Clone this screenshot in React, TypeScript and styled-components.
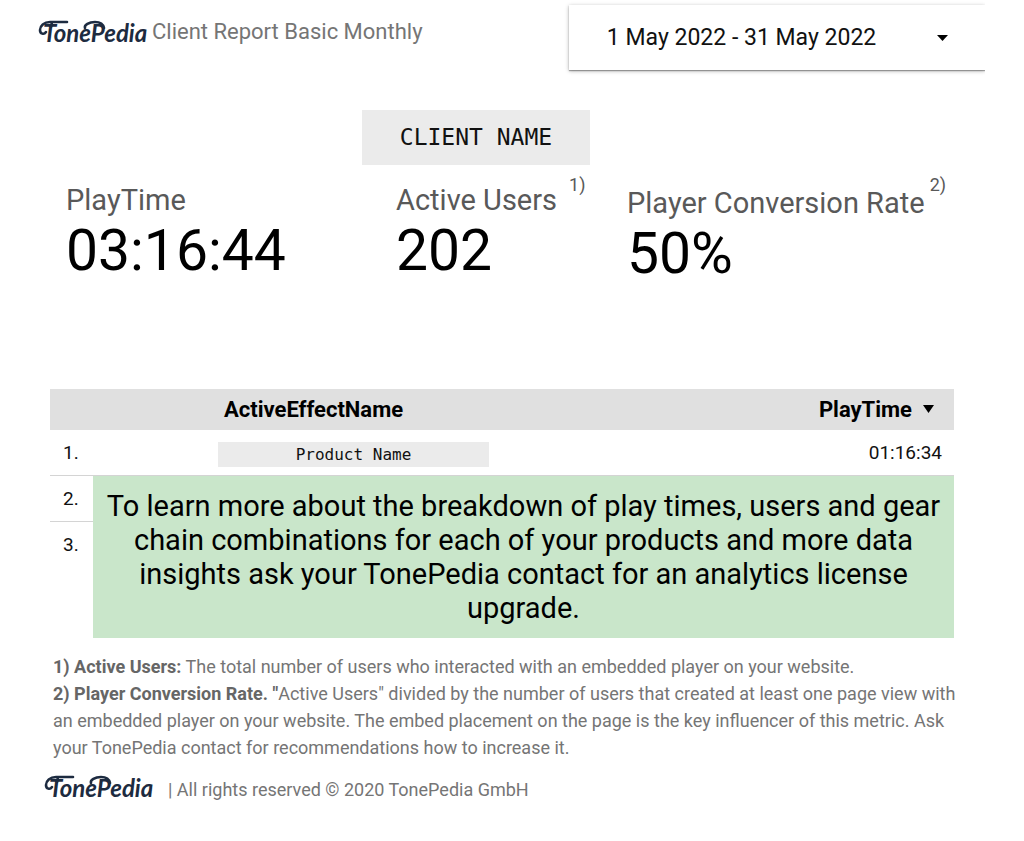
import React from 'react';
import styled, { createGlobalStyle } from 'styled-components';

const GlobalStyle = createGlobalStyle`
  * { box-sizing: border-box; }
  body {
    margin: 0;
    background: #fff;
    color: #000;
    font-family: Roboto, "Liberation Sans", sans-serif;
  }
  h1, h2, p, dl, dt, dd { margin: 0; font-weight: 400; }
`;

const Page = styled.div`
  padding: 5px 39px 36px 38px;
`;

const Header = styled.header`
  display: flex;
  align-items: flex-start;
  justify-content: space-between;
  margin-bottom: 40px;
`;

const Brand = styled.div`
  display: flex;
  align-items: center;
  gap: 6px;
  padding-top: 9px;
`;

const ReportTitle = styled.h1`
  font-size: 22px;
  line-height: 34px;
  padding-top: 1px;
  color: #757575;
  white-space: nowrap;
`;

const LogoSvg = styled.svg`
  display: block;
  width: 108px;
  height: 28px;
  flex: none;
  overflow: visible;
`;

const PickerClip = styled.div`
  flex: 0 0 45%;
  margin: -5px 0 -10px;
  padding: 5px 0 10px 10px;
  overflow: hidden;
`;

const Picker = styled.div`
  display: grid;
  align-items: center;
  background: #fff;
  box-shadow: 0 1px 4px rgba(0, 0, 0, 0.3), 0 1px 1px rgba(0, 0, 0, 0.3);
`;

const DateSelect = styled.select`
  grid-area: 1 / 1;
  appearance: none;
  width: 100%;
  height: 65px;
  padding: 0 60px 0 38px;
  border: 0;
  background: transparent;
  font: 23px Roboto, "Liberation Sans", sans-serif;
  color: #111;
`;

const PickerArrow = styled.svg`
  grid-area: 1 / 1;
  justify-self: end;
  width: 11px;
  height: 6px;
  margin-right: 37px;
  pointer-events: none;
`;

const ClientName = styled.h2`
  width: 228px;
  margin: 0 auto 15px 324px;
  background: #ebebeb;
  color: #111;
  font-family: "DejaVu Sans Mono", monospace;
  font-size: 23px;
  line-height: 55px;
  text-align: center;
`;

const Metrics = styled.dl`
  display: grid;
  grid-template-columns: 330fr 231fr 358fr;
  padding-left: 28px;
  margin-bottom: 104px;
`;

const Metric = styled.div<{ $lowered?: boolean }>`
  padding-top: ${(p) => (p.$lowered ? 3 : 0)}px;
`;

const MetricLabel = styled.dt`
  display: flex;
  align-items: flex-start;
  font-size: 29px;
  line-height: 40px;
  color: #595959;
  white-space: nowrap;
`;

const NoteMark = styled.sup<{ $lowered?: boolean }>`
  margin: ${(p) => (p.$lowered ? '-9px 0 0 5px' : '-6px 0 0 12px')};
  font-size: 18px;
  line-height: 22px;
`;

const MetricValue = styled.dd`
  font-size: 57px;
  line-height: 62px;
`;

const EffectTable = styled.table`
  width: calc(100% - 43px);
  margin: 0 31px 15px 12px;
  border-collapse: separate;
  border-spacing: 0;
  table-layout: fixed;
`;

const HeadCell = styled.th<{ $align?: string }>`
  height: 41px;
  padding: 0 20px 0 ${(p) => (p.$align === 'right' ? 0 : 131)}px;
  background: #e0e0e0;
  font-size: 22px;
  font-weight: 700;
  text-align: ${(p) => p.$align || 'left'};
`;

const IndexHead = styled.th`
  width: 43px;
  background: #e0e0e0;
`;

const SortArrow = styled.svg`
  width: 11px;
  height: 8px;
  margin-left: 11px;
  vertical-align: 4px;
`;

const Cell = styled.td<{ $last?: boolean; $align?: string }>`
  height: ${(p) => (p.$last ? 116 : 46)}px;
  padding: ${(p) => (p.$align ? '0 12px 0 0' : '0 0 0 13px')};
  border-bottom: ${(p) => (p.$last ? '0' : '1px solid #d4d4d4')};
  font-size: 19px;
  line-height: 45px;
  vertical-align: top;
  text-align: ${(p) => p.$align || 'left'};
  color: #111;
`;

const NameCell = styled(Cell)`
  padding: 12px 0 0 125px;
`;

const ProductChip = styled.span`
  display: block;
  width: 271px;
  background: #ebebeb;
  font-family: "DejaVu Sans Mono", monospace;
  font-size: 16px;
  line-height: 25px;
  text-align: center;
`;

const UpgradeCell = styled.td`
  padding: 13px 10px 0;
  background: #c9e6ca;
  font-size: 29px;
  line-height: 34px;
  text-align: center;
  vertical-align: top;
`;

const Notes = styled.section`
  margin: 0 27px 12px 15px;
  font-size: 18px;
  line-height: 27px;
  color: #757575;

  strong { color: #666; }
`;

const Footer = styled.footer`
  display: flex;
  align-items: flex-start;
  gap: 16px;
  padding-left: 6px;
  font-size: 18px;
  line-height: 34px;
  color: #757575;
`;

const Logo = () => (
  <LogoSvg viewBox="0 0 108 28" role="img" aria-label="TonePedia">
    <text
      x="5"
      y="24"
      fill="#1d2b40"
      fontFamily="Lato, sans-serif"
      fontSize="24"
      fontStyle="italic"
      fontWeight="700"
    >
      TonePedia
    </text>
    <g fill="none" stroke="#1d2b40" strokeWidth="2.6" strokeLinecap="round">
      <path d="M29 4H12C6 4 2 8 2 12C2 16 6 17 8 14M14 4L13 9" />
      <path d="M66 10C65 5 61 4 57 4C51 4 46 7 47 10" />
    </g>
  </LogoSvg>
);

const metrics = [
  { label: 'PlayTime', value: '03:16:44' },
  { label: 'Active Users', value: '202', mark: '1)' },
  { label: 'Player Conversion Rate', value: '50%', mark: '2)', lowered: true },
];

export default function App() {
  return (
    <>
      <GlobalStyle />
      <Page>
        <Header>
          <Brand>
            <Logo />
            <ReportTitle>Client Report Basic Monthly</ReportTitle>
          </Brand>
          <PickerClip>
            <Picker>
              <DateSelect aria-label="Date range">
                <option>1 May 2022 - 31 May 2022</option>
              </DateSelect>
              <PickerArrow viewBox="0 0 11 6" aria-hidden="true">
                <path d="M0 0H11L5.5 6Z" />
              </PickerArrow>
            </Picker>
          </PickerClip>
        </Header>
        <main>
          <ClientName>CLIENT NAME</ClientName>
          <Metrics>
            {metrics.map((m) => (
              <Metric key={m.label} $lowered={m.lowered}>
                <MetricLabel>
                  {m.label}
                  {m.mark && <NoteMark $lowered={m.lowered}>{m.mark}</NoteMark>}
                </MetricLabel>
                <MetricValue>{m.value}</MetricValue>
              </Metric>
            ))}
          </Metrics>
          <EffectTable>
            <thead>
              <tr>
                <IndexHead />
                <HeadCell scope="col">ActiveEffectName</HeadCell>
                <HeadCell scope="col" $align="right">
                  PlayTime
                  <SortArrow viewBox="0 0 11 8" aria-hidden="true">
                    <path d="M0 0H11L5.5 8Z" />
                  </SortArrow>
                </HeadCell>
              </tr>
            </thead>
            <tbody>
              <tr>
                <Cell>1.</Cell>
                <NameCell>
                  <ProductChip>Product Name</ProductChip>
                </NameCell>
                <Cell $align="right">01:16:34</Cell>
              </tr>
              <tr>
                <Cell>2.</Cell>
                <UpgradeCell colSpan={2} rowSpan={2}>
                  To learn more about the breakdown of play times, users and gear chain
                  combinations for each of your products and more data insights ask your
                  TonePedia contact for an analytics license upgrade.
                </UpgradeCell>
              </tr>
              <tr>
                <Cell $last>3.</Cell>
              </tr>
            </tbody>
          </EffectTable>
          <Notes>
            <p>
              <strong>1) Active Users:</strong> The total number of users who interacted with an
              embedded player on your website.
            </p>
            <p>
              <strong>2) Player Conversion Rate. "</strong>Active Users" divided by the number of
              users that created at least one page view with an embedded player on your website.
              The embed placement on the page is the key influencer of this metric. Ask your
              TonePedia contact for recommendations how to increase it.
            </p>
          </Notes>
        </main>
        <Footer>
          <Logo />
          <span>| All rights reserved © 2020 TonePedia GmbH</span>
        </Footer>
      </Page>
    </>
  );
}
